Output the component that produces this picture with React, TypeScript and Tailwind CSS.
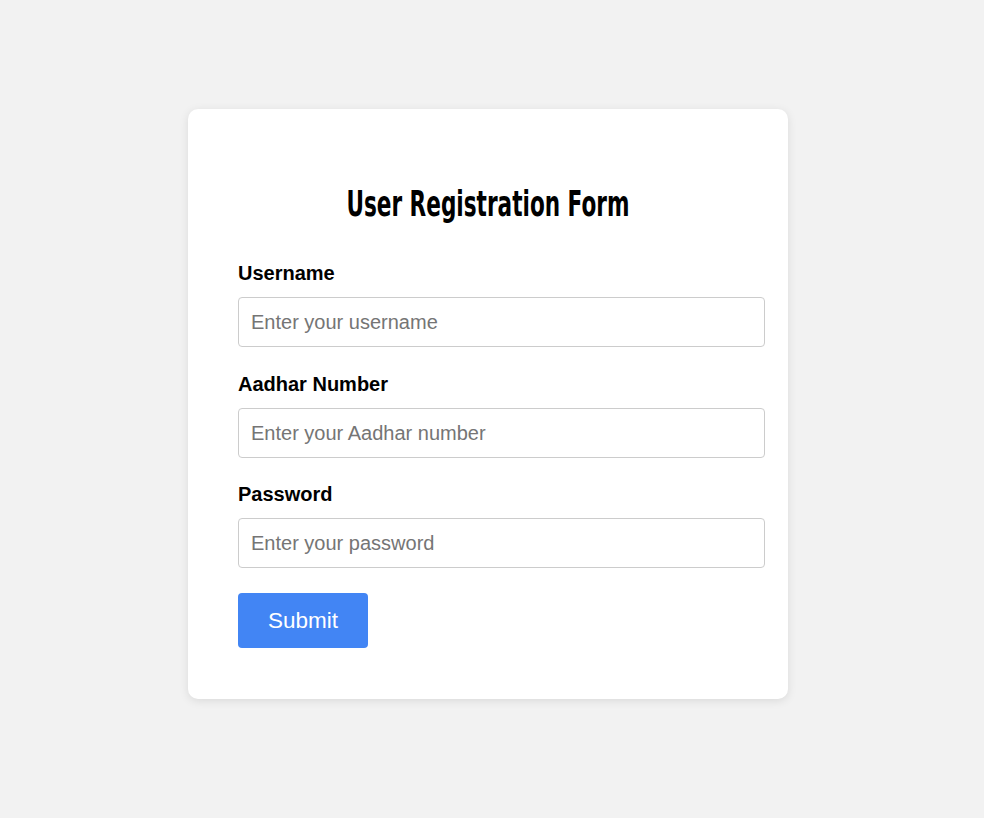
export default function App() {
  return (
    <div className="flex min-h-[818px] w-full items-start justify-center bg-[#f2f2f2] pt-[109px] pr-[8px] font-['Liberation_Sans',Arial,sans-serif]">
      <form className="w-[600px] rounded-[10px] bg-white px-[50px] pt-[50px] pb-[51px] shadow-[0_2px_10px_rgba(0,0,0,0.1)]">
        <h2 className="mt-[26px] mb-[39px] text-center text-[36px] leading-[38px] font-bold text-black">
          <span className="inline-block scale-x-[0.6] font-['DejaVu_Sans',sans-serif] whitespace-nowrap">
            User Registration Form
          </span>
        </h2>
        <label className="block text-[20px] leading-[23px] font-bold text-black">Username</label>
        <input
          type="text"
          placeholder="Enter your username"
          className="mt-[12px] mb-[26px] block h-[50px] w-[527px] rounded-[4px] border border-[#ccc] px-[12px] text-[20px] outline-none placeholder:text-[#757575]"
        />
        <label className="block text-[20px] leading-[23px] font-bold text-black">Aadhar Number</label>
        <input
          type="text"
          placeholder="Enter your Aadhar number"
          className="mt-[12px] mb-[25px] block h-[50px] w-[527px] rounded-[4px] border border-[#ccc] px-[12px] text-[20px] outline-none placeholder:text-[#757575]"
        />
        <label className="block text-[20px] leading-[23px] font-bold text-black">Password</label>
        <input
          type="password"
          placeholder="Enter your password"
          className="mt-[12px] mb-[25px] block h-[50px] w-[527px] rounded-[4px] border border-[#ccc] px-[12px] text-[20px] outline-none placeholder:text-[#757575]"
        />
        <button
          type="button"
          className="h-[55px] w-[130px] rounded-[4px] bg-[#4285f4] text-[22.5px] text-white"
        >
          Submit
        </button>
      </form>
    </div>
  );
}
